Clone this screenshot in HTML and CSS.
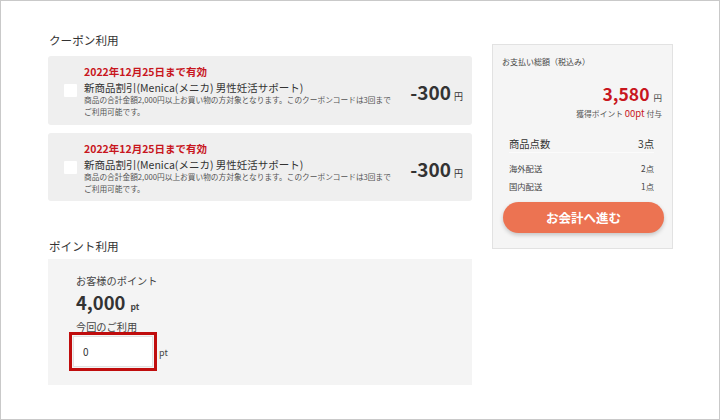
FILE: index.html
```html
<!DOCTYPE html>
<html lang="ja">
<head>
<meta charset="utf-8">
<link rel="stylesheet" href="styles.css">
</head>
<body>
<div class="frame">
  <div class="main">
    <h2 class="sec-title coupon-title">クーポン利用</h2>
    <div class="coupon">
      <input type="checkbox" class="check">
      <div class="coupon-body">
        <div class="valid">2022年12月25日まで有効</div>
        <div class="coupon-name">新商品割引(Menica(メニカ) 男性妊活サポート)</div>
        <div class="coupon-desc">商品の合計金額2,000円以上お買い物の方対象となります。このクーポンコードは3回まで<br>ご利用可能です。</div>
      </div>
      <div class="amount"><span class="num">-300</span><span class="yen">円</span></div>
    </div>
    <div class="coupon">
      <input type="checkbox" class="check">
      <div class="coupon-body">
        <div class="valid">2022年12月25日まで有効</div>
        <div class="coupon-name">新商品割引(Menica(メニカ) 男性妊活サポート)</div>
        <div class="coupon-desc">商品の合計金額2,000円以上お買い物の方対象となります。このクーポンコードは3回まで<br>ご利用可能です。</div>
      </div>
      <div class="amount"><span class="num">-300</span><span class="yen">円</span></div>
    </div>

    <h2 class="sec-title point-title">ポイント利用</h2>
    <div class="points">
      <div class="pt-label">お客様のポイント</div>
      <div class="pt-total"><span class="pt-num">4,000</span><span class="pt-unit">pt</span></div>
      <div class="pt-label use-label">今回のご利用</div>
      <div class="use-row">
        <div class="highlight"><input type="text" class="pt-input" value="0"></div>
        <span class="use-unit">pt</span>
      </div>
    </div>
  </div>

  <aside class="side">
    <div class="pay-label">お支払い総額（税込み）</div>
    <div class="total"><span class="total-num">3,580</span><span class="total-yen">円</span></div>
    <div class="earn">獲得ポイント <span class="earn-pt">00pt</span> 付与</div>
    <div class="row row-main"><span>商品点数</span><span>3点</span></div>
    <div class="row row-sub first"><span>海外配送</span><span>2点</span></div>
    <div class="row row-sub"><span>国内配送</span><span>1点</span></div>
    <button class="checkout">お会計へ進む</button>
  </aside>
</div>
</body>
</html>
```

FILE: styles.css
```css
* { box-sizing: border-box; }
html, body { margin: 0; padding: 0; background: #fff; }
body {
  font-family: "Noto Sans CJK JP", "Noto Sans", sans-serif;
  color: #333;
}
.frame {
  width: 720px;
  height: 420px;
  border: 1px solid #c9c9c9;
  display: flex;
  align-items: flex-start;
  padding: 30px 0 0 47px;
}
.main { width: 424px; }
.sec-title {
  margin: 0;
  font-size: 11.6px;
  font-weight: 400;
  line-height: 18px;
  color: #333;
  padding-left: 1px;
}
.coupon-title { margin-bottom: 7px; }
.point-title { margin-top: 36px; margin-bottom: 4px; }

.coupon {
  display: flex;
  align-items: center;
  background: #efefef;
  border-radius: 3px;
  padding: 7px 9px 6px 16px;
  margin-bottom: 8px;
}
.check {
  appearance: none;
  -webkit-appearance: none;
  width: 13px;
  height: 13px;
  margin: 0 7px 0 0;
  background: #fff;
  border: none;
  border-radius: 1px;
  flex: none;
}
.coupon-body { flex: 1; }
.valid {
  color: #c8161e;
  font-weight: 700;
  font-size: 10.5px;
  line-height: 18px;
}
.coupon-name {
  font-size: 10.5px;
  line-height: 13px;
  color: #333;
}
.coupon-desc {
  font-size: 7.7px;
  line-height: 12.3px;
  color: #555;
}
.amount {
  display: flex;
  align-items: baseline;
  margin-top: 2px;
}
.num {
  font-size: 19px;
  font-weight: 700;
  color: #333;
}
.yen {
  font-size: 9px;
  margin-left: 3px;
  color: #333;
}

.points {
  background: #f4f4f4;
  height: 126px;
  padding: 14px 0 0 28px;
}
.pt-label {
  font-size: 10.2px;
  line-height: 16px;
  color: #444;
}
.pt-total {
  display: flex;
  align-items: baseline;
  height: 24px;
  line-height: 24px;
  margin-top: 1px;
}
.pt-num {
  font-size: 18.4px;
  font-weight: 700;
  color: #333;
}
.pt-unit {
  font-size: 8.5px;
  font-weight: 700;
  margin-left: 5px;
  color: #444;
}
.use-label {
  margin-top: 5px;
  line-height: 16px;
}
.use-row {
  display: flex;
  align-items: center;
  margin-left: -7px;
  margin-top: -3px;
}
.highlight {
  border: 3px solid #c00d0d;
  padding: 1px;
}
.pt-input {
  display: block;
  width: 80px;
  height: 31px;
  border: 1px solid #e2e2e2;
  padding: 0 0 0 9px;
  font-family: "Noto Sans CJK JP", "Noto Sans", sans-serif;
  font-size: 10px;
  color: #333;
  background: #fff;
  outline: none;
}
.use-unit {
  font-size: 9px;
  color: #444;
  margin-left: 2px;
  margin-top: 2px;
}

.side {
  width: 181px;
  height: 205px;
  margin-left: 20px;
  margin-top: 13px;
  background: #f5f5f5;
  border: 1px solid #e2e2e2;
  padding: 11px 10px 0 9px;
}
.pay-label {
  font-size: 8px;
  line-height: 12px;
  color: #444;
}
.total {
  display: flex;
  justify-content: flex-end;
  align-items: baseline;
  height: 24px;
  line-height: 24px;
  margin-top: 14px;
}
.total-num {
  font-size: 17.5px;
  font-weight: 700;
  color: #c8161e;
}
.total-yen {
  font-size: 8.5px;
  margin-left: 4px;
  color: #444;
}
.earn {
  display: flex;
  justify-content: flex-end;
  align-items: baseline;
  height: 14px;
  font-size: 7.8px;
  line-height: 14px;
  color: #555;
  white-space: pre;
}
.earn-pt {
  color: #c8161e;
  font-size: 9.5px;
}
.row {
  display: flex;
  justify-content: space-between;
  margin: 0 8px 0 7px;
}
.row-main {
  margin-top: 16px;
  font-size: 10.3px;
  line-height: 16px;
  color: #333;
  border-bottom: 1px solid #fbfbfb;
}
.row-sub {
  font-size: 8.3px;
  line-height: 14px;
  color: #444;
  margin-top: 4px;
}
.row-sub.first { margin-top: 8px; }
.checkout {
  display: block;
  width: 161px;
  height: 31px;
  margin: 9px 0 0 1px;
  border: none;
  border-radius: 16px;
  background: #ec7352;
  color: #fff;
  font-family: "Noto Sans CJK JP", "Noto Sans", sans-serif;
  font-size: 12.5px;
  font-weight: 700;
  box-shadow: 0 2px 4px rgba(0, 0, 0, 0.2);
  padding: 0;
}
```
